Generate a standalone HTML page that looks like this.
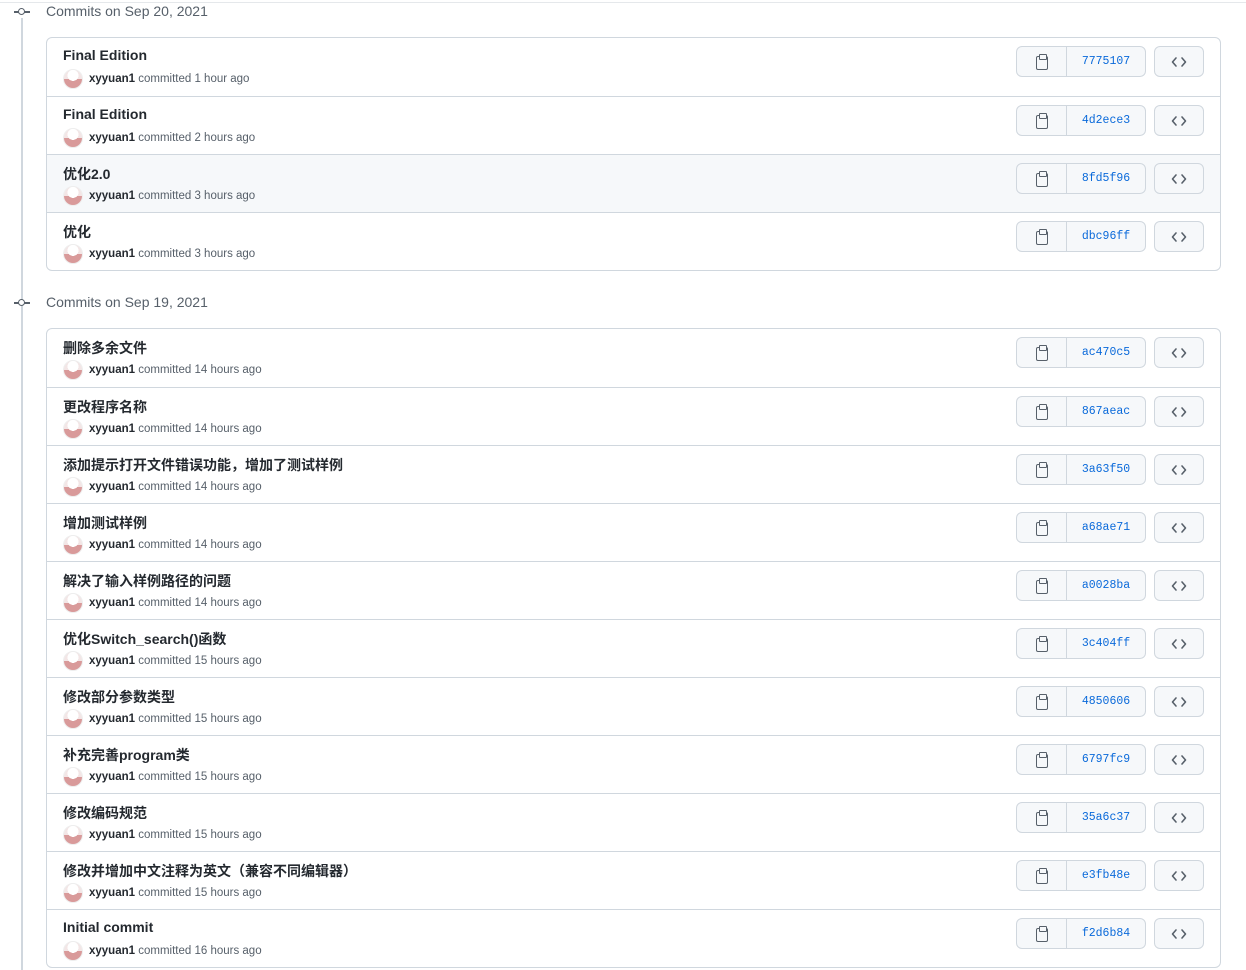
<!DOCTYPE html>
<html><head><meta charset="utf-8"><style>
*{box-sizing:border-box;margin:0;padding:0}
body{width:1246px;height:970px;background:#fff;font-family:"Liberation Sans","Noto Sans CJK SC",sans-serif;color:#24292f;position:relative;overflow:hidden}
.top{position:absolute;left:0;right:0;top:2px;border-top:1px solid #e5e8eb}
.line{position:absolute;left:21px;top:18px;width:2px;height:952px;background:#d0d7de}
.hd{position:absolute;left:0;height:20px;font-size:14px;color:#57606a}
.hd .ic{position:absolute;left:14px;top:9px;width:16px;height:1.5px;background:#57606a}
.hd .ic:after{content:"";position:absolute;left:4px;top:-3px;width:5px;height:5px;border:1.5px solid #57606a;border-radius:50%;background:#fff}
.hd span{position:absolute;left:46px;top:1px;white-space:nowrap}
.box{position:absolute;left:46px;width:1175px;border:1px solid #d0d7de;border-radius:6px;overflow:hidden}
.row{position:relative;height:58px;border-top:1px solid #d0d7de}
.row:first-child{border-top:none}
.row.hl{background:#f6f8fa}
.t{position:absolute;left:16px;top:9px;font-size:14px;font-weight:600;white-space:nowrap}
.m{position:absolute;left:16px;top:31px;font-size:11.5px;color:#57606a;white-space:nowrap;line-height:20px}
.av{display:inline-block;width:20px;height:20px;border-radius:50%;background:radial-gradient(circle at 50% 30%,#fff 0 35%,transparent 36%),linear-gradient(#f3e6e6 50%,#d99a9a 50%);border:1px solid #eee;vertical-align:middle;margin-right:6px}
.m b{color:#24292f;font-weight:600}
.g{position:absolute;left:969px;top:8px;width:130px;height:31px;border:1px solid #d0d7de;border-radius:6px;background:#f6f8fa;display:flex}
.g .c{width:50px;border-right:1px solid #d0d7de;position:relative}
.g .c:before{content:"";position:absolute;left:19px;top:9px;width:10px;height:12px;border:1.6px solid #57606a;border-radius:2px}
.g .c:after{content:"";position:absolute;left:22px;top:7px;width:6px;height:4px;border:1.6px solid #57606a;background:#f6f8fa;border-radius:1px}
.g .s{flex:1;text-align:center;font-family:"Liberation Mono",monospace;font-size:11.5px;color:#0969da;line-height:29px}
.b{position:absolute;left:1107px;top:8px;width:50px;height:31px;border:1px solid #d0d7de;border-radius:6px;background:#f6f8fa}
.b svg{position:absolute;left:16px;top:7px}
</style></head><body>
<svg width="0" height="0" style="position:absolute"><defs><symbol id="cd" viewBox="0 0 16 16"><path d="M5 4 1.5 8 5 12M11 4l3.5 4-3.5 4" fill="none" stroke="#57606a" stroke-width="1.6" stroke-linecap="round" stroke-linejoin="round"/></symbol></defs></svg>
<div class="top"></div>
<div class="line"></div>
<div class="hd" style="top:2px"><div class="ic"></div><span>Commits on Sep 20, 2021</span></div>
<div class="box" style="top:37px">
<div class="row"><div class="t">Final Edition</div><div class="m"><span class="av"></span><b>xyyuan1</b> committed 1 hour ago</div><div class="g"><div class="c"></div><div class="s">7775107</div></div><div class="b"><svg width="16" height="16"><use href="#cd"/></svg></div></div>
<div class="row"><div class="t">Final Edition</div><div class="m"><span class="av"></span><b>xyyuan1</b> committed 2 hours ago</div><div class="g"><div class="c"></div><div class="s">4d2ece3</div></div><div class="b"><svg width="16" height="16"><use href="#cd"/></svg></div></div>
<div class="row hl"><div class="t">优化2.0</div><div class="m"><span class="av"></span><b>xyyuan1</b> committed 3 hours ago</div><div class="g"><div class="c"></div><div class="s">8fd5f96</div></div><div class="b"><svg width="16" height="16"><use href="#cd"/></svg></div></div>
<div class="row"><div class="t">优化</div><div class="m"><span class="av"></span><b>xyyuan1</b> committed 3 hours ago</div><div class="g"><div class="c"></div><div class="s">dbc96ff</div></div><div class="b"><svg width="16" height="16"><use href="#cd"/></svg></div></div>
</div>
<div class="hd" style="top:293px"><div class="ic"></div><span>Commits on Sep 19, 2021</span></div>
<div class="box" style="top:328px">
<div class="row"><div class="t">删除多余文件</div><div class="m"><span class="av"></span><b>xyyuan1</b> committed 14 hours ago</div><div class="g"><div class="c"></div><div class="s">ac470c5</div></div><div class="b"><svg width="16" height="16"><use href="#cd"/></svg></div></div>
<div class="row"><div class="t">更改程序名称</div><div class="m"><span class="av"></span><b>xyyuan1</b> committed 14 hours ago</div><div class="g"><div class="c"></div><div class="s">867aeac</div></div><div class="b"><svg width="16" height="16"><use href="#cd"/></svg></div></div>
<div class="row"><div class="t">添加提示打开文件错误功能，增加了测试样例</div><div class="m"><span class="av"></span><b>xyyuan1</b> committed 14 hours ago</div><div class="g"><div class="c"></div><div class="s">3a63f50</div></div><div class="b"><svg width="16" height="16"><use href="#cd"/></svg></div></div>
<div class="row"><div class="t">增加测试样例</div><div class="m"><span class="av"></span><b>xyyuan1</b> committed 14 hours ago</div><div class="g"><div class="c"></div><div class="s">a68ae71</div></div><div class="b"><svg width="16" height="16"><use href="#cd"/></svg></div></div>
<div class="row"><div class="t">解决了输入样例路径的问题</div><div class="m"><span class="av"></span><b>xyyuan1</b> committed 14 hours ago</div><div class="g"><div class="c"></div><div class="s">a0028ba</div></div><div class="b"><svg width="16" height="16"><use href="#cd"/></svg></div></div>
<div class="row"><div class="t">优化Switch_search()函数</div><div class="m"><span class="av"></span><b>xyyuan1</b> committed 15 hours ago</div><div class="g"><div class="c"></div><div class="s">3c404ff</div></div><div class="b"><svg width="16" height="16"><use href="#cd"/></svg></div></div>
<div class="row"><div class="t">修改部分参数类型</div><div class="m"><span class="av"></span><b>xyyuan1</b> committed 15 hours ago</div><div class="g"><div class="c"></div><div class="s">4850606</div></div><div class="b"><svg width="16" height="16"><use href="#cd"/></svg></div></div>
<div class="row"><div class="t">补充完善program类</div><div class="m"><span class="av"></span><b>xyyuan1</b> committed 15 hours ago</div><div class="g"><div class="c"></div><div class="s">6797fc9</div></div><div class="b"><svg width="16" height="16"><use href="#cd"/></svg></div></div>
<div class="row"><div class="t">修改编码规范</div><div class="m"><span class="av"></span><b>xyyuan1</b> committed 15 hours ago</div><div class="g"><div class="c"></div><div class="s">35a6c37</div></div><div class="b"><svg width="16" height="16"><use href="#cd"/></svg></div></div>
<div class="row"><div class="t">修改并增加中文注释为英文（兼容不同编辑器）</div><div class="m"><span class="av"></span><b>xyyuan1</b> committed 15 hours ago</div><div class="g"><div class="c"></div><div class="s">e3fb48e</div></div><div class="b"><svg width="16" height="16"><use href="#cd"/></svg></div></div>
<div class="row"><div class="t">Initial commit</div><div class="m"><span class="av"></span><b>xyyuan1</b> committed 16 hours ago</div><div class="g"><div class="c"></div><div class="s">f2d6b84</div></div><div class="b"><svg width="16" height="16"><use href="#cd"/></svg></div></div>
</div>
</body></html>
